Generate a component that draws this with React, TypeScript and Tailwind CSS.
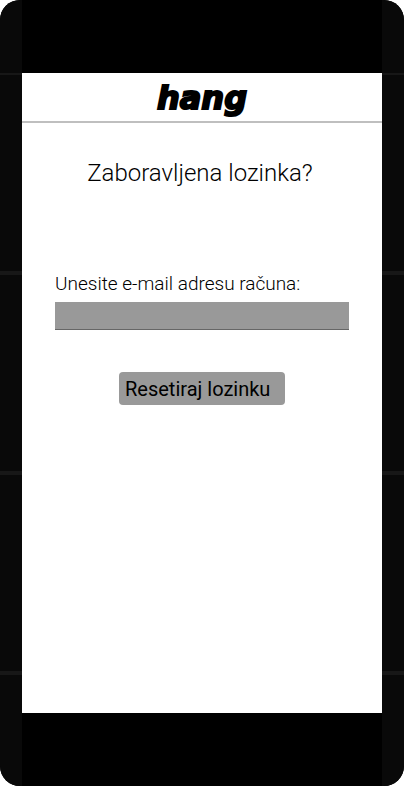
import { useState } from "react";

function Rail() {
  return (
    <div aria-hidden="true" className="flex w-[22px] shrink-0 flex-col bg-[#090909]">
      <div className="h-[73px]" />
      <div className="h-[198px] border-t-2 border-[#171717]" />
      <div className="h-[200px] border-t-4 border-[#171717]" />
      <div className="h-[200px] border-t-4 border-[#171717]" />
      <div className="flex-1 border-t-4 border-[#171717]" />
    </div>
  );
}

export default function App() {
  const [email, setEmail] = useState("");

  return (
    <div className="min-h-screen bg-white pb-px font-['Roboto',sans-serif] text-black">
      <div className="flex min-h-[calc(100vh-1px)] overflow-hidden rounded-[20px] bg-black">
        <Rail />
        <div className="flex min-w-0 flex-1 flex-col py-[73px]">
          <div className="flex-1 bg-white">
            <header className="flex h-[50px] items-center justify-center border-b-2 border-[#bfbfbf] pt-0.5">
              <span className="font-['DejaVu_Sans',sans-serif] text-[32px] leading-8 font-bold italic [-webkit-text-stroke:2px_black]">
                hang
              </span>
            </header>
            <main className="px-[33px] pt-8">
              <h1 className="pr-1 text-center text-2xl leading-9 font-light">Zaboravljena lozinka?</h1>
              <form className="flex flex-col pt-[81px]" onSubmit={(e) => e.preventDefault()}>
                <label htmlFor="email" className="text-[19px] leading-6 font-light">
                  Unesite e-mail adresu računa:
                </label>
                <input
                  id="email"
                  type="email"
                  value={email}
                  onChange={(e) => setEmail(e.target.value)}
                  className="mt-1.5 h-7 w-full border-b border-[#666666] bg-[#999999] px-2 outline-none"
                />
                <button
                  type="submit"
                  className="mt-[42px] h-[33px] w-[166px] self-center rounded bg-[#999999] px-1.5 text-left text-xl leading-6"
                >
                  Resetiraj lozinku
                </button>
              </form>
            </main>
          </div>
        </div>
        <Rail />
      </div>
    </div>
  );
}
